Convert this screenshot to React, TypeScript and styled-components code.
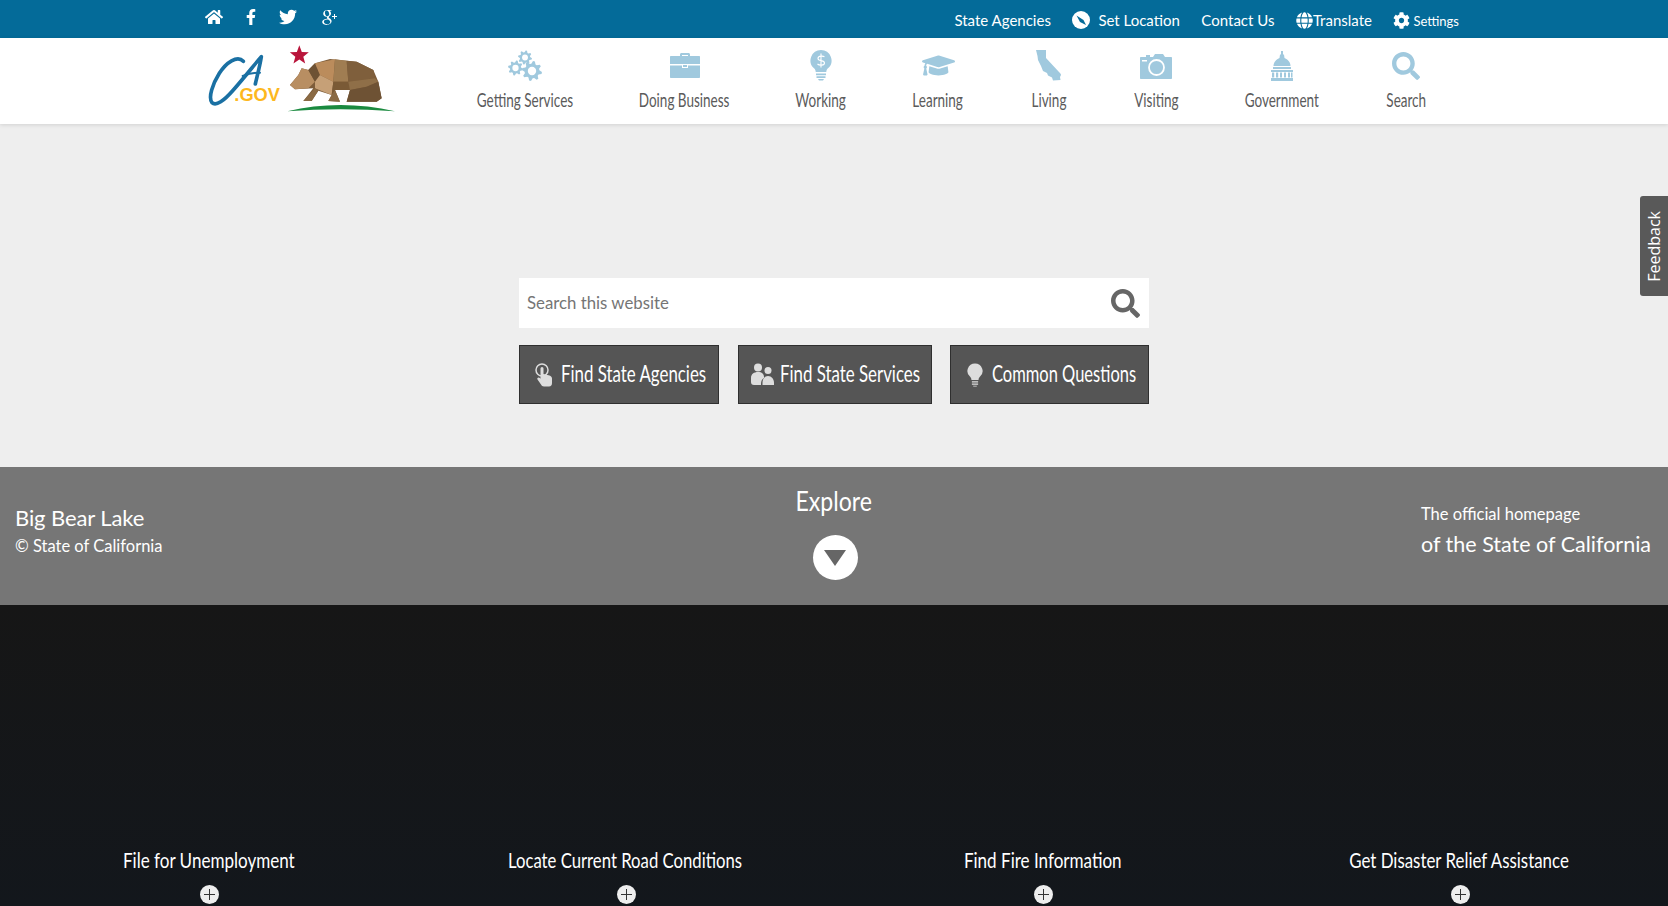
import React from 'react';
import styled, { createGlobalStyle } from 'styled-components';
import { FaHome, FaFacebookF, FaTwitter, FaCog, FaGraduationCap, FaSearch, FaGlobe } from 'react-icons/fa';
import { TiSocialGooglePlus } from 'react-icons/ti';

const GlobalStyle = createGlobalStyle`
  html, body { margin: 0; padding: 0; background: #eee; }
  body { font-family: "Lato", "Noto Sans", sans-serif; overflow: hidden; }
`;

const Page = styled.div`
  position: relative;
  width: 1668px;
  height: 906px;
  overflow: hidden;
  display: flex;
  flex-direction: column;
`;

const TopBar = styled.div`
  height: 38px;
  background: #046b99;
  display: flex;
  justify-content: space-between;
  padding: 0 209px 0 205px;
  color: #fff;
`;

const Socials = styled.div`
  display: flex;
  align-items: center;
  gap: 20px;
  height: 34px;
`;

const Utility = styled.div`
  display: flex;
  align-items: center;
  gap: 21.5px;
  height: 40px;
`;

const UtilityLink = styled.span<{ $gap?: number }>`
  display: flex;
  align-items: center;
  gap: ${p => p.$gap ?? 0}px;
  font-size: 15px;
  svg { flex: none; }
`;

const Small = styled.span`
  font-size: 13px;
  position: relative;
  top: 1px;
`;

const Header = styled.header`
  height: 86px;
  background: #fff;
  box-shadow: 0 1px 4px rgba(0, 0, 0, 0.12);
  display: flex;
  padding-left: 205px;
  position: relative;
`;

const Logo = styled.svg`
  width: 192px;
  height: 74px;
  margin-top: 7px;
  flex: none;
`;

const Nav = styled.nav`
  display: flex;
  margin-left: 46px;
`;

const NavItem = styled.div<{ $w: number }>`
  width: ${p => p.$w}px;
  padding-top: 11px;
  display: flex;
  flex-direction: column;
  align-items: center;
  color: #5b5b5b;
  font-size: 18.5px;
  line-height: 22px;
`;

const NavIcon = styled.div`
  height: 33px;
  margin-bottom: 7px;
  display: flex;
  align-items: center;
  justify-content: center;
  color: #a0c9de;
`;

const Narrow = styled.span<{ $x: number }>`
  display: inline-block;
  white-space: nowrap;
  transform: scaleX(${p => p.$x});
`;

const Main = styled.main`
  height: 343px;
  display: flex;
  flex-direction: column;
  align-items: center;
  padding-top: 154px;
  box-sizing: border-box;
`;

const SearchBox = styled.div`
  width: 630px;
  height: 50px;
  background: #fff;
  display: flex;
  align-items: center;
  justify-content: space-between;
  padding: 0 9px 2px 8px;
  box-sizing: border-box;
  color: #757575;
  font-size: 16.8px;
  svg { margin-top: 2px; }
`;

const Buttons = styled.div`
  width: 630px;
  margin-top: 17px;
  display: flex;
  justify-content: space-between;
`;

const ActionButton = styled.div<{ $w: number }>`
  width: ${p => p.$w}px;
  height: 59px;
  box-sizing: border-box;
  background: #555;
  border: 1px solid #2f2f2f;
  display: flex;
  align-items: center;
  padding: 0 0 3px 11px;
  color: #fff;
  font-size: 23px;
  overflow: hidden;
`;

const IconSlot = styled.span`
  width: 26px;
  margin-right: 4px;
  margin-top: 3px;
  flex: none;
  display: flex;
  justify-content: center;
`;

const ButtonLabel = styled(Narrow)`
  transform-origin: left center;
`;

const Band = styled.section`
  height: 138px;
  background: #767676;
  color: #fff;
  display: grid;
  grid-template-columns: 1fr auto 1fr;
  padding: 0 17px 0 15px;
`;

const Place = styled.div`
  align-self: center;
  margin-top: -10px;
`;

const PlaceName = styled.div`
  font-size: 22px;
  line-height: 30px;
  letter-spacing: -0.1px;
`;

const Copy = styled.div`
  font-size: 16.5px;
  line-height: 26px;
`;

const Explore = styled.div`
  display: flex;
  flex-direction: column;
  align-items: center;
  padding-top: 17px;
  margin-left: 2px;
  font-size: 27px;
  line-height: 34px;
`;

const DownCircle = styled.div`
  width: 45px;
  height: 45px;
  margin-top: 17px;
  margin-left: 3px;
  border-radius: 50%;
  background: #fff;
  display: flex;
  align-items: center;
  justify-content: center;
`;

const Official = styled.div`
  justify-self: end;
  align-self: center;
  margin-top: -12px;
`;

const OfficialTop = styled.div`
  font-size: 16.5px;
  line-height: 28px;
`;

const OfficialBottom = styled.div`
  font-size: 21.5px;
  line-height: 32px;
`;

const Tiles = styled.section`
  flex: 1;
  background: linear-gradient(#161616, #13171c);
  display: grid;
  grid-template-columns: repeat(4, 417px);
  color: #fff;
`;

const Tile = styled.div`
  display: flex;
  flex-direction: column;
  align-items: center;
  padding-top: 242px;
  font-size: 22px;
  line-height: 26px;
`;

const Plus = styled.div`
  width: 19px;
  height: 19px;
  margin-top: 12px;
  margin-left: 1px;
  border-radius: 50%;
  background: #eee;
  display: flex;
  align-items: center;
  justify-content: center;
`;

const Feedback = styled.div`
  position: absolute;
  right: 0;
  top: 196px;
  width: 28px;
  height: 100px;
  background: #595959;
  border-radius: 3px 0 0 3px;
  color: #fff;
  font-family: "Open Sans", sans-serif;
  font-size: 16px;
  display: flex;
  align-items: center;
  justify-content: center;
  writing-mode: vertical-rl;
  span { transform: rotate(180deg); }
`;

const gearPath = (cx: number, cy: number, r: number) => {
  const teeth = 8;
  let d = '';
  for (let i = 0; i < teeth * 4; i++) {
    const a = (i / (teeth * 4)) * Math.PI * 2;
    const rr = i % 4 < 2 ? r : r * 0.74;
    d += `${i ? 'L' : 'M'}${(cx + rr * Math.cos(a + 0.1)).toFixed(2)} ${(cy + rr * Math.sin(a + 0.1)).toFixed(2)}`;
  }
  return `${d}Z`;
};

const starPoints = (cx: number, cy: number, r: number) => {
  const pts: string[] = [];
  for (let i = 0; i < 10; i++) {
    const a = (i / 10) * Math.PI * 2 - Math.PI / 2;
    const rr = i % 2 ? r * 0.42 : r;
    pts.push(`${(cx + rr * Math.cos(a)).toFixed(1)},${(cy + rr * Math.sin(a)).toFixed(1)}`);
  }
  return pts.join(' ');
};

const GearsIcon = () => (
  <svg width="34" height="32" viewBox="0 0 34 32" fill="#a0c9de">
    {[[17, 7.5, 7], [7.5, 18, 7.5], [24, 21, 10]].map(([x, y, r]) => (
      <g key={x}>
        <path d={gearPath(x, y, r)} />
        <circle cx={x} cy={y} r={r * 0.42} fill="#fff" />
      </g>
    ))}
  </svg>
);

const BriefcaseIcon = () => (
  <svg width="30" height="25" viewBox="0 0 30 25" fill="#a0c9de">
    <path d="M10 3V1.500C10 .6 10.600 0 11.500 0h7c.9 0 1.500.6 1.500 1.500V3h-2V2h-6v1z" />
    <path d="M1 3h28c.6 0 1 .4 1 1v7H0V4c0-.6.4-1 1-1z" />
    <path d="M0 12.500h12V15h6v-2.500h12V24c0 .6-.4 1-1 1H1c-.6 0-1-.4-1-1z" />
    <path d="M13 12h4v2h-4z" />
  </svg>
);

const DollarBulb = () => (
  <svg width="22" height="31" viewBox="0 0 22 31">
    <path d="M11 0a10.500 10.500 0 0 1 7 18.300c-1.200 1.100-1.700 2.200-1.700 3.700H5.700c0-1.500-.5-2.600-1.700-3.700A10.500 10.500 0 0 1 11 0z" fill="#a0c9de" />
    <path d="M14.500 7c-1.200-1.300-6.500-1.500-6.500 1.500 0 3.100 6.500 1.200 6.500 4.500 0 2.800-5.300 2.600-7 1M11 3.500v14" fill="none" stroke="#fff" strokeWidth="1.100" />
    <path d="M6 23.500h10v1.800H6zM6.500 26.300h9v1.800h-9zM8 29h6l-1 1.500H9z" fill="#a0c9de" />
  </svg>
);

const CaliforniaIcon = () => (
  <svg width="26" height="31" viewBox="0 0 26 31" fill="#a0c9de">
    <path d="M0 0h10v8l13 14c1 1 2 2 2 3l-1 2 .5 3-7.500.5-1-3-4-2-1-2.500-4-2-2-5-3-6-.5-4z" />
  </svg>
);

const CameraIcon = () => (
  <svg width="32" height="26" viewBox="0 0 32 26">
    <path d="M1 4h5V2h4v2h3l2-3h8l2 3h6c.6 0 1 .4 1 1v20c0 .6-.4 1-1 1H1c-.6 0-1-.4-1-1V5c0-.6.4-1 1-1z" fill="#a0c9de" />
    <circle cx="16.500" cy="14.500" r="7.500" fill="#a0c9de" stroke="#fff" strokeWidth="1.800" />
    <rect x="2" y="7" width="5" height="1.500" fill="#fff" />
  </svg>
);

const CapitolIcon = () => (
  <svg width="22" height="30" viewBox="0 0 22 30" fill="#a0c9de">
    <rect x="10" y="0" width="2" height="4" />
    <path d="M9 3.500h4l.5 3.500c4 1.500 6 5 6 8h-17c0-3 2-6.500 6-8z" />
    <rect x="2" y="16" width="18" height="2" />
    <path d="M0 19h22v2H0zM0 27h22v3H0z" />
    <path d="M1 21.500h2.200v5H1zM5 21.500h2.200v5H5zM9 21.500h2v5H9zM13 21.500h2v5h-2zM17 21.500h2v5h-2zM20 21.500h1.500v5H20z" />
  </svg>
);

const PointerIcon = () => (
  <svg width="18" height="24" viewBox="0 0 18 24" fill="#ddd">
    <circle cx="7" cy="7" r="6" fill="none" stroke="#ddd" strokeWidth="1.500" />
    <path d="M5.500 5.500a1.500 1.500 0 0 1 3 0V11l6 1.500c1.500.5 2.500 1.500 2.500 3V20c0 2-1 3.500-3 3.500H9c-1.500 0-2.500-1-3-2l-3.500-5c-1-1.500 1-3 2.300-1.500l.7.8z" />
  </svg>
);

const PeopleIcon = () => (
  <svg width="24" height="23" viewBox="0 0 24 23" fill="#ddd">
    <circle cx="7" cy="4.500" r="4" />
    <circle cx="17" cy="7.500" r="3.500" />
    <path d="M0 15c0-4 3-6 7-6s6 2 6 5v1c-2 1-3 3-3 6v1H3c-2 0-3-1-3-3z" />
    <path d="M11.500 22v-2c0-4 2-7 5.500-7s6 3 6 7v2z" />
  </svg>
);

const BulbIcon = () => (
  <svg width="16" height="26" viewBox="0 0 18 26" fill="#ddd">
    <path d="M9 0a8.500 8.500 0 0 1 5.500 15c-1 1-1.500 2-1.500 3.500H5C5 17 4.500 16 3.500 15A8.500 8.500 0 0 1 9 0z" />
    <path d="M5.500 20h7v1.500h-7zM5.500 22.500h7V24h-7zM7 25h4v1H7z" />
  </svg>
);

const CompassIcon = () => (
  <svg width="18" height="18" viewBox="0 0 18 18">
    <circle cx="9" cy="9" r="9" fill="#fff" />
    <path d="M4.500 4.500l7 4.500 2.500 5-6-3z" fill="#046b99" />
  </svg>
);

// coordinates below are traced at 3x, hence the scale on the group
const LogoMark = () => (
  <Logo viewBox="0 0 192 74">
    <g transform="translate(-5 -5) scale(.3333)">
      <path d="M130 64C112 44 78 68 58 100C38 132 24 172 36 188C48 200 72 182 100 150C130 116 165 72 184 50C180 76 172 106 166 132" fill="none" stroke="#1a70a3" strokeWidth="11" strokeLinecap="round" strokeLinejoin="round" />
      <path d="M128 108Q156 98 180 98" fill="none" stroke="#1a70a3" strokeWidth="6" strokeLinecap="round" />
      <text x="103" y="183" fontFamily="Liberation Sans, sans-serif" fontWeight="700" fontSize="54" fill="#fdb81e" textLength="137" lengthAdjust="spacingAndGlyphs">.GOV</text>
      <polygon points={starPoints(298, 46, 30)} fill="#b9153b" />
      <polygon points="270,135 295,105 305,85 325,90 345,70 390,57 470,65 520,90 535,125 545,175 530,185 440,185 450,150 405,150 420,185 385,183 395,165 355,152 335,183 310,183 340,145 285,148" fill="#7d5c3a" />
      <polygon points="270,135 295,105 305,85 325,90 345,125 325,145 285,148" fill="#b88e62" />
      <polygon points="325,90 345,70 360,105 345,125" fill="#6e5234" />
      <polygon points="345,70 405,58 400,125 360,105" fill="#bb8c5c" />
      <polygon points="405,58 440,62 445,125 400,125" fill="#a07d52" />
      <polygon points="440,62 470,65 520,90 525,115 445,125" fill="#7f5f3c" />
      <polygon points="360,105 400,125 395,165 345,145 345,125" fill="#c6a077" />
      <polygon points="400,125 445,125 450,150 405,150 395,165" fill="#7a5a36" />
      <polygon points="445,125 525,115 535,125 500,140 450,150" fill="#8f6f48" />
      <polygon points="450,150 500,140 535,125 545,175 530,185 440,185" fill="#6e5234" />
      <polygon points="395,165 405,150 420,185 385,183" fill="#8a6a44" />
      <polygon points="345,145 355,152 335,183 310,183" fill="#8a6a44" />
      <path d="M262 214Q420 176 585 214Q420 202 262 214z" fill="#1a8a3f" />
    </g>
  </Logo>
);

const navItems: { label: string; w: number; icon: React.ReactNode }[] = [
  { label: 'Getting Services', w: 164, icon: <GearsIcon /> },
  { label: 'Doing Business', w: 155, icon: <BriefcaseIcon /> },
  { label: 'Working', w: 117, icon: <DollarBulb /> },
  { label: 'Learning', w: 118, icon: <FaGraduationCap size={33} /> },
  { label: 'Living', w: 104, icon: <CaliforniaIcon /> },
  { label: 'Visiting', w: 110, icon: <CameraIcon /> },
  { label: 'Government', w: 142, icon: <CapitolIcon /> },
  { label: 'Search', w: 106, icon: <FaSearch size={28} /> },
];

const actions = [
  { label: 'Find State Agencies', w: 200, x: 0.733, icon: <PointerIcon /> },
  { label: 'Find State Services', w: 194, x: 0.733, icon: <PeopleIcon /> },
  { label: 'Common Questions', w: 199, x: 0.717, icon: <BulbIcon /> },
];

const tiles = [
  { label: 'File for Unemployment', x: 0.775 },
  { label: 'Locate Current Road Conditions', x: 0.76 },
  { label: 'Find Fire Information', x: 0.775 },
  { label: 'Get Disaster Relief Assistance', x: 0.768 },
];

export default function App() {
  return (
    <Page>
      <GlobalStyle />
      <TopBar>
        <Socials>
          <FaHome size={18} />
          <FaFacebookF size={16} />
          <FaTwitter size={18} />
          <TiSocialGooglePlus size={24} />
        </Socials>
        <Utility>
          <UtilityLink>State Agencies</UtilityLink>
          <UtilityLink $gap={8}><CompassIcon />Set Location</UtilityLink>
          <UtilityLink>Contact Us</UtilityLink>
          <UtilityLink><FaGlobe size={17} />Translate</UtilityLink>
          <UtilityLink $gap={3}><FaCog size={17} /><Small>Settings</Small></UtilityLink>
        </Utility>
      </TopBar>
      <Header>
        <LogoMark />
        <Nav>
          {navItems.map(item => (
            <NavItem key={item.label} $w={item.w}>
              <NavIcon>{item.icon}</NavIcon>
              <Narrow $x={0.73}>{item.label}</Narrow>
            </NavItem>
          ))}
        </Nav>
      </Header>
      <Main>
        <SearchBox>
          <span>Search this website</span>
          <FaSearch size={29} color="#666" />
        </SearchBox>
        <Buttons>
          {actions.map(a => (
            <ActionButton key={a.label} $w={a.w}>
              <IconSlot>{a.icon}</IconSlot>
              <ButtonLabel $x={a.x}>{a.label}</ButtonLabel>
            </ActionButton>
          ))}
        </Buttons>
      </Main>
      <Band>
        <Place>
          <PlaceName>Big Bear Lake</PlaceName>
          <Copy>© State of California</Copy>
        </Place>
        <Explore>
          <Narrow $x={0.855}>Explore</Narrow>
          <DownCircle>
            <svg width="22" height="16" viewBox="0 0 22 16"><path d="M0 0h22L11 16z" fill="#666" /></svg>
          </DownCircle>
        </Explore>
        <Official>
          <OfficialTop>The official homepage</OfficialTop>
          <OfficialBottom>of the State of California</OfficialBottom>
        </Official>
      </Band>
      <Tiles>
        {tiles.map(t => (
          <Tile key={t.label}>
            <Narrow $x={t.x}>{t.label}</Narrow>
            <Plus>
              <svg width="11" height="11" viewBox="0 0 11 11"><path d="M5.500 0v11M0 5.500h11" stroke="#333" strokeWidth="1" /></svg>
            </Plus>
          </Tile>
        ))}
      </Tiles>
      <Feedback><span>Feedback</span></Feedback>
    </Page>
  );
}
